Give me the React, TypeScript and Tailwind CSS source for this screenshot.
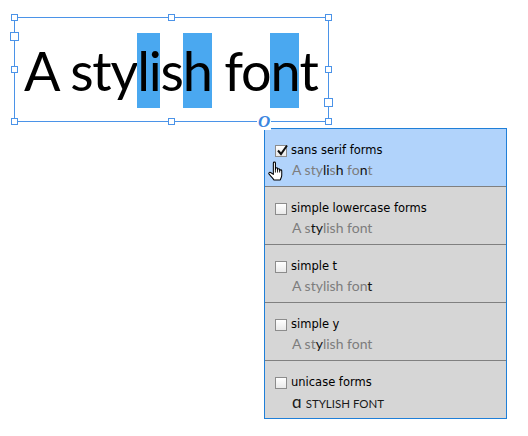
import React from "react";

type Part = { t: string; dark?: boolean };

const rows: { label: string; checked: boolean; active: boolean; sample: Part[] }[] = [
  {
    label: "sans serif forms",
    checked: true,
    active: true,
    sample: [{ t: "A sty" }, { t: "li", dark: true }, { t: "s" }, { t: "h", dark: true }, { t: " fo" }, { t: "n", dark: true }, { t: "t" }],
  },
  { label: "simple lowercase forms", checked: false, active: false, sample: [{ t: "A s" }, { t: "ty", dark: true }, { t: "lish font" }] },
  { label: "simple t", checked: false, active: false, sample: [{ t: "A stylish fon" }, { t: "t", dark: true }] },
  { label: "simple y", checked: false, active: false, sample: [{ t: "A st" }, { t: "y", dark: true }, { t: "lish font" }] },
];

function Handle({ className, big }: { className: string; big?: boolean }) {
  return (
    <div
      className={
        "absolute bg-white border border-[#4b93e8] " +
        (big ? "w-[9px] h-[9px] " : "w-[7px] h-[7px] ") +
        className
      }
    />
  );
}

function Checkbox({ checked }: { checked: boolean }) {
  return (
    <div className="relative w-[12px] h-[12px] border border-[#8c8c8c] bg-gradient-to-b from-white to-[#e9e9e9] shrink-0">
      {checked && (
        <svg className="absolute -top-[2px] left-0" width="13" height="13" viewBox="0 0 13 13">
          <path d="M2 6.5 L5 10 L11 1.5" fill="none" stroke="#111" strokeWidth="2" />
        </svg>
      )}
    </div>
  );
}

function HandCursor() {
  return (
    <svg width="19" height="21" viewBox="0 0 18 20" className="absolute left-[267px] top-[161px]">
      <path
        d="M6 1.8 C6 0.6 8 0.6 8 1.8 L8 8 L8 7.3 C8 6.2 10 6.2 10 7.3 L10 8.6 L10 8.2 C10 7.1 12 7.1 12 8.2 L12 9.3 L12 9.2 C12 8.2 14 8.2 14 9.2 L14 13.5 C14 15.4 13 16.4 12.6 18 L6.6 18 C5.6 16.2 3.6 14.4 1.9 12.6 C1.1 11.7 2.2 10.3 3.4 11 L6 12.8 Z"
        fill="#fff"
        stroke="#000"
        strokeWidth="1"
        strokeLinejoin="round"
      />
      <path d="M8 8 L8 11 M10 8.6 L10 11 M12 9.3 L12 11" stroke="#000" strokeWidth="0.8" />
    </svg>
  );
}

export default function App() {
  return (
    <div className="relative w-[528px] h-[436px] bg-white overflow-hidden" style={{ fontFamily: "'DejaVu Sans', sans-serif" }}>
      <div className="relative ml-[14px] mt-[17px] w-[315px] h-[105px] border border-[#4b93e8]">
        <div className="pl-[9px] pt-[15px] leading-[75px] text-[54px] text-black whitespace-nowrap tracking-[-1.2px]" style={{ fontFamily: "Lato, sans-serif" }}>
          A sty<span className="inline-block bg-[#4aa8f0] h-[75px]">li</span>s<span className="inline-block bg-[#4aa8f0] h-[75px]">h</span> fo<span className="inline-block bg-[#4aa8f0] h-[75px]">n</span>t
        </div>
        <Handle className="-left-[4px] -top-[4px]" />
        <Handle className="left-[153px] -top-[4px]" />
        <Handle className="-right-[4px] -top-[4px]" />
        <Handle big className="-left-[5px] top-[14px]" />
        <Handle className="-left-[4px] top-[48px]" />
        <Handle className="-right-[4px] top-[48px]" />
        <Handle big className="-right-[5px] top-[80px]" />
        <Handle className="-left-[4px] -bottom-[4px]" />
        <Handle className="left-[153px] -bottom-[4px]" />
        <Handle className="-right-[4px] -bottom-[4px]" />
        <span
          className="absolute left-[242px] -bottom-[9px] bg-white px-[1px] text-[17px] leading-[17px] italic font-bold text-[#3a86e0]"
          style={{ fontFamily: "'Liberation Serif', serif" }}
        >
          O
        </span>
      </div>

      <div className="ml-[264px] mt-[6px] w-[243px] border border-[#1f7fd8] bg-[#d6d6d6]">
        {rows.map((r, i) => (
          <div key={i} className={"h-[58px] border-b border-[#808080] pl-[10px] pt-[12px] " + (r.active ? "bg-[#b1d3fb]" : "")}>
            <div className="flex items-center gap-[4px] h-[19px] text-[11.5px] text-black">
              <Checkbox checked={r.checked} />
              <span>{r.label}</span>
            </div>
            <div className="pl-[17px] h-[20px] leading-[20px] text-[14px] text-[#7d7d7d]" style={{ fontFamily: "Lato, sans-serif" }}>
              {r.sample.map((p, j) => (
                <span key={j} className={p.dark ? "text-[#111]" : ""}>{p.t}</span>
              ))}
            </div>
          </div>
        ))}
        <div className="h-[57px] pl-[10px] pt-[12px]">
          <div className="flex items-center gap-[4px] h-[19px] text-[11.5px] text-black">
            <Checkbox checked={false} />
            <span>unicase forms</span>
          </div>
          <div className="pl-[17px] h-[20px] leading-[20px] text-[#1a1a1a] whitespace-nowrap" style={{ fontFamily: "Lato, sans-serif" }}>
            <span className="text-[17px]">ɑ</span> <span className="text-[11.5px]">STYLISH FONT</span>
          </div>
        </div>
      </div>
      <HandCursor />
    </div>
  );
}
